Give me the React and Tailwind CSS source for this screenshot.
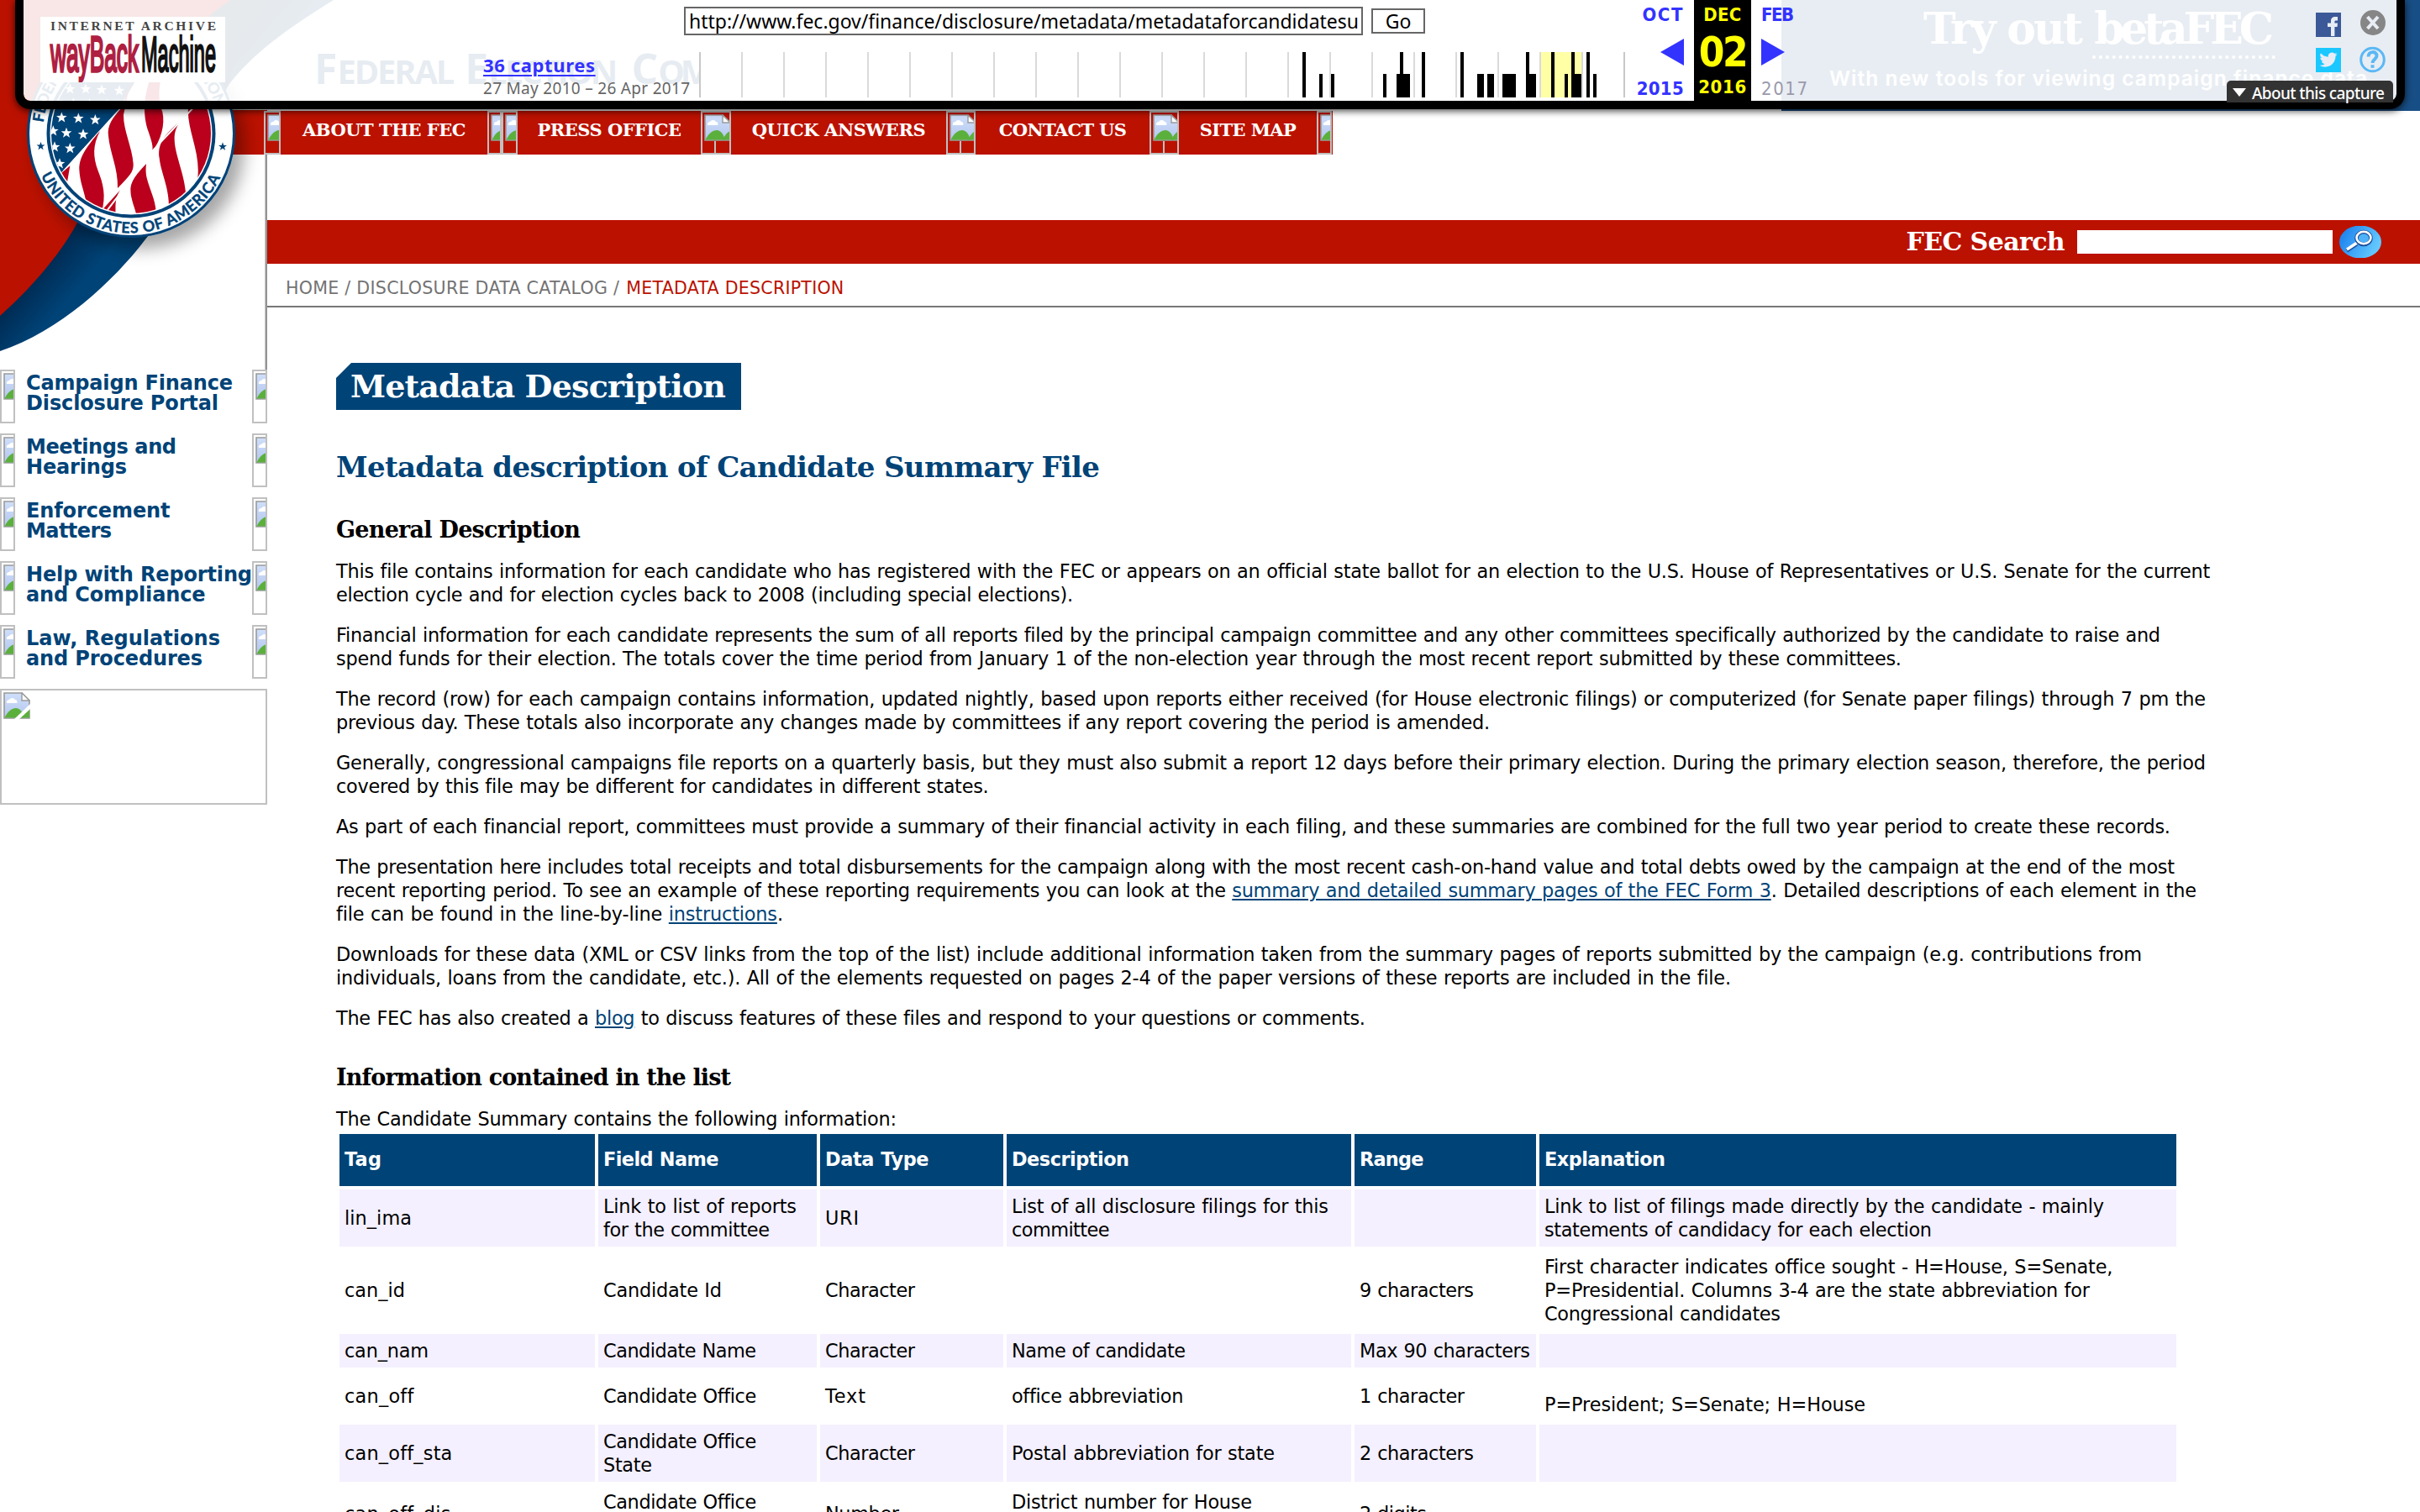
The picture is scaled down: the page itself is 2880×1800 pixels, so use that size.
import React, { useLayoutEffect, useRef, useState } from "react";

const SERIF = "font-['DejaVu_Serif',serif] font-bold";
const SANS = "font-['DejaVu_Sans',sans-serif]";
const UI = "font-['Noto_Sans',sans-serif]";

/* A single line of text tracked so that it fills the given width. */
function Fit({ w, className = "", children }) {
  const ref = useRef(null);
  const [spacing, setSpacing] = useState(0);
  useLayoutEffect(() => {
    const el = ref.current;
    el.style.letterSpacing = "0px";
    const natural = el.getBoundingClientRect().width;
    const next = (w - natural) / Math.max(1, el.textContent.length - 1);
    el.style.letterSpacing = next + "px";
    setSpacing(next);
  }, [w]);
  return (
    <span ref={ref} className={"inline-block whitespace-pre " + className} style={{ letterSpacing: spacing + "px" }}>
      {children}
    </span>
  );
}

/* Broken-image placeholder: bordered box with the page glyph clipped inside. */
function Broken({ className = "", wide = false }) {
  return (
    <span className={"block shrink-0 overflow-hidden border-2 border-[#c0c0c0] " + className}>
      <svg className="mt-[2px] ml-[2px] block h-8 w-8 max-w-none" viewBox="0 0 32 32">
        <defs>
          <linearGradient id="sky" x1="0" y1="0" x2="0" y2="1">
            <stop offset="0" stopColor="#cfdffa" />
            <stop offset="1" stopColor="#b3c6ee" />
          </linearGradient>
        </defs>
        <path d="M1 1H22L31 10V31H1Z" fill="url(#sky)" stroke="#9a9a9a" strokeWidth="1.6" />
        <path d="M4 13a3 3 0 0 1 3-4a4 4 0 0 1 7 0a2.500 2.500 0 0 1 2 4Z" fill="#fff" />
        <path d="M1.500 30.500C5 23 10 19 15 19C20 19 23 24 25 30.500Z" fill="#5bb03c" />
        <path d="M22 30.500C25 24 28 21 31 20V30.500Z" fill="#5bb03c" />
        <path d="M22 1V10H31Z" fill="#fff" stroke="#9a9a9a" strokeWidth="1.4" />
        {!wide && <path d="M13 32L32 14V20L19 32Z" fill="#fff" />}
      </svg>
    </span>
  );
}

const star = "M0 -20L5 -6.500L19 -6.200L8 2.500L12 16.500L0 8.300L-12 16.500L-8 2.500L-19 -6.200L-5 -6.500Z";
const stars = [
  [220, 60], [280, 63], [340, 68], [190, 108], [237, 115], [297, 120], [195, 165], [250, 170], [213, 225],
  [250, -42], [306, -42], [363, -39], [426, -36], [205, 5], [262, 8], [320, 12], [382, 14],
];

function Masthead() {
  return (
    <svg className="block h-[440px] w-[318px] overflow-visible" viewBox="0 0 318 440">
      <defs>
        <filter id="seal-shadow" x="-30%" y="-30%" width="170%" height="170%">
          <feDropShadow dx="11" dy="13" stdDeviation="10" floodColor="#000" floodOpacity="0.35" />
        </filter>
        <linearGradient id="swoosh" gradientUnits="userSpaceOnUse" x1="60" y1="300" x2="100" y2="335">
          <stop offset="0" stopColor="#00284f" />
          <stop offset="1" stopColor="#004377" />
        </linearGradient>
        <clipPath id="flag"><circle cx="156" cy="159" r="95" /></clipPath>
        <path id="ring-top" d="M51.600 146A105 105 0 0 1 260.400 146" />
        <path id="ring-bottom" d="M48.600 209A118.500 118.500 0 0 0 263.400 209" />
      </defs>
      <rect x="150" y="131" width="168" height="53" fill="#bb1100" />
      <path d="M397 0C340 35 300 65 273 100C235 160 215 235 173 285C135 335 70 395 0 418V0Z" fill="url(#swoosh)" />
      <path d="M275 0C245 20 225 40 200 70C150 130 125 215 91 267C70 305 35 345 0 376V0Z" fill="#bb1100" />
      <circle cx="156" cy="159" r="124" fill="#004377" filter="url(#seal-shadow)" />
      <circle cx="156" cy="159" r="121" fill="#fff" />
      <circle cx="156" cy="159" r="100.500" fill="#004377" />
      <circle cx="156" cy="159" r="96.500" fill="#fff" />
      <g clipPath="url(#flag)">
        <g transform="translate(0 120) scale(0.33333)">
          <path d="M100 -200H560L425 30L225 250L150 330Z" fill="#004377" />
          {stars.map(([x, y], i) => (
            <path key={i} d={star} transform={`translate(${x} ${y})`} fill="#fff" />
          ))}
          <path d="M560 -200L425 30L225 250L250 400H700V-200Z" fill="#fff" />
          <g fill="#ba001c">
            <path d="M250 232L215 262L240 290Z" />
            <path d="M357 108C300 175 283 205 283 245C285 290 300 320 310 370L362 400C380 340 368 295 350 250C332 200 330 160 357 108Z" />
            <path d="M440 20C400 60 382 90 387 125C392 185 422 240 420 312C460 270 478 255 476 225C472 165 440 105 441 50L470 -90Z" />
            <path d="M540 -90C505 0 515 70 530 110C542 145 548 165 543 182C575 140 590 85 580 40C570 10 560 -30 580 -100Z" />
            <path d="M360 395L430 318C410 345 412 375 413 412Z" />
            <path d="M522 225C470 280 462 300 468 340C474 370 484 390 490 420H558C560 360 535 320 524 275C520 258 520 245 522 225Z" />
            <path d="M642 75C580 125 562 160 569 205C575 260 605 310 603 385L665 360C665 270 625 200 623 140C622 110 630 95 642 75Z" />
            <path d="M672 20C665 110 725 190 702 300L780 200V20Z" />
          </g>
          <path d="M690 25L545 178L380 395" fill="none" stroke="#fff" strokeWidth="6" />
        </g>
      </g>
      <g fill="#004377" stroke="#004377" strokeWidth="0.400" className="font-['Lato',sans-serif] text-[18px] font-bold">
        <text textLength="288" lengthAdjust="spacing"><textPath href="#ring-top" textLength="288">FEDERAL ELECTION COMMISSION</textPath></text>
        <text textLength="266" lengthAdjust="spacing"><textPath href="#ring-bottom" textLength="266">UNITED STATES OF AMERICA</textPath></text>
        <path d={star} transform="translate(48.500 174) scale(0.25)" />
        <path d={star} transform="translate(265 174.500) scale(0.25)" />
      </g>
      <rect x="315.500" y="184" width="2.500" height="256" fill="#949494" />
    </svg>
  );
}

const ticks = [
  [718, 4, 1], [738, 4, 0], [752, 4, 0], [814, 4, 0], [830, 16, 0], [834, 4, 1], [860, 4, 1], [906, 4, 1],
  [926, 8, 0], [938, 8, 0], [956, 16, 0], [984, 4, 1], [984, 12, 0], [1014, 4, 1], [1030, 4, 0], [1038, 4, 1],
  [1038, 12, 0], [1056, 4, 1], [1064, 4, 0],
];

function Sparkline() {
  return (
    <svg className="ml-[18px] block h-[54px] w-[1102px] bg-white" viewBox="0 0 1102 54">
      <rect x="1002" width="48" height="54" fill="#ffffa5" />
      {Array.from({ length: 23 }, (_, i) => (
        <rect key={i} x={i * 50} width="2" height="54" fill={i === 22 || i === 0 ? "#c8c8c8" : "#dadada"} />
      ))}
      {ticks.map(([x, w, full], i) => (
        <rect key={i} x={x} y={full ? 0 : 26} width={w} height={full ? 54 : 28} fill="#000" />
      ))}
    </svg>
  );
}

const DATE = "font-['DejaVu_Sans_Condensed','DejaVu_Sans',sans-serif] text-[22px] leading-7 font-bold";

function Toolbar() {
  return (
    <div className={"absolute top-0 left-[18px] z-10 flex h-[130px] w-[2844px] rounded-b-[18px] border-x-10 border-b-10 border-black bg-white/90 bg-clip-padding shadow-[0_2px_8px_rgba(0,0,0,0.75)] " + UI}>
      <svg className="mt-5 ml-5 block h-[78px] w-[220px] shrink-0 bg-white" viewBox="0 0 220 78">
        <text x="12" y="15.500" textLength="197" className="font-['Liberation_Serif',serif] text-[15.500px] font-bold" fill="#444">INTERNET ARCHIVE</text>
        <g transform="translate(12 65) scale(1 2.200)" className="font-['Liberation_Sans',sans-serif] text-[27px]">
          <text x="0" y="0" textLength="105" lengthAdjust="spacingAndGlyphs" fill="#ae1f41" stroke="#ae1f41" strokeWidth="1.500">wayBack</text>
          <text x="108" y="0" textLength="89" lengthAdjust="spacingAndGlyphs" fill="#111" stroke="#111" strokeWidth="1.200">Machine</text>
        </g>
      </svg>
      <div className="ml-[307px] w-[239px] shrink-0 pt-[62px] whitespace-nowrap">
        <div className="h-[30px] text-[22px] leading-[30px] font-bold text-[#3333ff]">
          <Fit w={133} className="underline decoration-2 underline-offset-[3px]">36 captures</Fit>
        </div>
        <div className="text-[19px] leading-[26px] text-[#666]"><Fit w={246}>27 May 2010 – 26 Apr 2017</Fit></div>
      </div>
      <div className="w-[1120px] shrink-0">
        <div className="mt-2 flex h-[34px] items-center gap-[10px]">
          <div className="h-[34px] w-[808px] border-2 border-[#666] bg-white pl-1 text-[23px] leading-[31px]">
            <Fit w={797}>http://www.fec.gov/finance/disclosure/metadata/metadataforcandidatesu</Fit>
          </div>
          <div className="h-[30px] w-16 border-2 border-[#666] bg-white text-center text-[23px] leading-[27px]">Go</div>
        </div>
        <div className="h-5" />
        <Sparkline />
      </div>
      <div className={"flex w-[82px] shrink-0 flex-col items-end pr-3 text-[#3333ff] pt-1 " + DATE}>
        <Fit w={48}>OCT</Fit>
        <svg className="my-[14px] block h-8 w-7" viewBox="0 0 28 32"><path d="M28 0V32L0 16Z" fill="#3333ff" /></svg>
        <Fit w={56}>2015</Fit>
      </div>
      <div className={"flex h-[120px] w-[68px] shrink-0 flex-col items-center bg-black pt-1 text-[#ffff00] " + DATE}>
        <Fit w={45}>DEC</Fit>
        <span className="my-1 text-[49px] leading-[53px]"><Fit w={59}>02</Fit></span>
        <Fit w={57} className="-mt-[3px]">2016</Fit>
      </div>
      <div className={"flex shrink-0 flex-col items-start pt-1 pl-3 text-[#3333ff] " + DATE}>
        <Fit w={39}>FEB</Fit>
        <svg className="my-[14px] block h-8 w-7" viewBox="0 0 28 32"><path d="M0 0V32L28 16Z" fill="#3333ff" /></svg>
        <Fit w={55} className="font-normal text-[#9a9aac]">2017</Fit>
      </div>
      <div className="ml-auto flex gap-[22px] pr-[13px]">
        <div className="flex flex-col gap-[13px] pt-[15px]">
          <svg className="block h-[29px] w-[30px]" viewBox="0 0 30 29">
            <rect width="30" height="29" fill="#3b5998" />
            <path d="M18 28V17H14V12.500H18V10C18 6.500 20 5 23 5H26V9.500H24C22.800 9.500 22.400 10 22.400 11V12.500H26L25.500 17H22.400V28Z" fill="#e8edf5" />
          </svg>
          <svg className="block h-[29px] w-[30px]" viewBox="0 0 30 29">
            <rect width="30" height="29" fill="#1ac8ff" />
            <path transform="translate(4.500 3.500) scale(0.880)" d="M23.950 4.570a10 10 0 0 1-2.820.770 4.960 4.960 0 0 0 2.160-2.720c-.950.560-2 .960-3.130 1.190a4.920 4.920 0 0 0-8.380 4.480C7.690 8.090 4.070 6.130 1.640 3.160a4.920 4.920 0 0 0 1.520 6.570 4.900 4.900 0 0 1-2.230-.610v.060a4.920 4.920 0 0 0 3.950 4.830 5 5 0 0 1-2.210.080 4.940 4.940 0 0 0 4.600 3.420A9.870 9.870 0 0 1 0 19.540a14 14 0 0 0 7.550 2.210c9.050 0 14-7.500 14-13.980 0-.210 0-.420-.020-.630a9.940 9.940 0 0 0 2.460-2.550z" fill="#e8edf5" />
          </svg>
        </div>
        <div className="flex flex-col gap-[13px] pt-3">
          <svg className="block h-[30px] w-[31px]" viewBox="0 0 31 30">
            <circle cx="16" cy="15" r="15" fill="#868686" />
            <path d="M9.500 8L22 22M22 8L9.500 22" stroke="#e8edf5" strokeWidth="4" />
          </svg>
          <svg className="block h-[32px] w-[31px]" viewBox="0 0 31 32">
            <circle cx="15.500" cy="16" r="13.800" fill="none" stroke="#5ab8f5" strokeWidth="3" />
            <path d="M10.500 12.500C10.500 5.500 20.500 5.500 20.500 11.500C20.500 15.500 15.500 15.500 15.500 20" fill="none" stroke="#5ab8f5" strokeWidth="4" />
            <rect x="13.500" y="22.300" width="4" height="3.500" fill="#5ab8f5" />
          </svg>
        </div>
      </div>
      <div className="absolute right-1 -bottom-[2px] flex h-[26px] w-[198px] items-start rounded-t-[5px] bg-[#333] pl-[7px] text-white">
        <svg className="mt-[9px] block h-[10px] w-4" viewBox="0 0 16 10"><path d="M0 0H16L8 10Z" fill="#fff" /></svg>
        <Fit w={158} className="ml-[7px] text-[19px] leading-[30px] font-medium">About this capture</Fit>
      </div>
    </div>
  );
}

const nav = [
  ["ABOUT THE FEC", 194.5, "w-[246px]"],
  ["PRESS OFFICE", 171.5, "w-[218px]"],
  ["QUICK ANSWERS", 207, "w-[256px]"],
  ["CONTACT US", 152, "w-[207px]"],
  ["SITE MAP", 115, "w-[164px]"],
];

const side = [
  [["Campaign Finance", 246], ["Disclosure Portal", 229]],
  [["Meetings and", 179], ["Hearings", 120]],
  [["Enforcement", 171.5], ["Matters", 102]],
  [["Help with Reporting", 269], ["and Compliance", 213.5]],
  [["Law, Regulations", 231], ["and Procedures", 210]],
];

function A({ children }) {
  return <a className="text-[#004377] underline decoration-2 underline-offset-2">{children}</a>;
}

const paragraphs = [
  [
    ["This file contains information for each candidate who has registered with the FEC or appears on an official state ballot for an election to the U.S. House of Representatives or U.S. Senate for the current", 2230],
    ["election cycle and for election cycles back to 2008 (including special elections).", 877],
  ],
  [
    ["Financial information for each candidate represents the sum of all reports filed by the principal campaign committee and any other committees specifically authorized by the candidate to raise and", 2171],
    ["spend funds for their election. The totals cover the time period from January 1 of the non-election year through the most recent report submitted by these committees.", 1863],
  ],
  [
    ["The record (row) for each campaign contains information, updated nightly, based upon reports either received (for House electronic filings) or computerized (for Senate paper filings) through 7 pm the", 2225],
    ["previous day. These totals also incorporate any changes made by committees if any report covering the period is amended.", 1373],
  ],
  [
    ["Generally, congressional campaigns file reports on a quarterly basis, but they must also submit a report 12 days before their primary election. During the primary election season, therefore, the period", 2225],
    ["covered by this file may be different for candidates in different states.", 776],
  ],
  [["As part of each financial report, committees must provide a summary of their financial activity in each filing, and these summaries are combined for the full two year period to create these records.", 2183]],
  [
    ["The presentation here includes total receipts and total disbursements for the campaign along with the most recent cash-on-hand value and total debts owed by the campaign at the end of the most", 2188],
    [<>recent reporting period. To see an example of these reporting requirements you can look at the <A>summary and detailed summary pages of the FEC Form 3</A>. Detailed descriptions of each element in the</>, 2214],
    [<>file can be found in the line-by-line <A>instructions</A>.</>, 532],
  ],
  [
    ["Downloads for these data (XML or CSV links from the top of the list) include additional information taken from the summary pages of reports submitted by the campaign (e.g. contributions from", 2149],
    ["individuals, loans from the candidate, etc.). All of the elements requested on pages 2-4 of the paper versions of these reports are included in the file.", 1660],
  ],
  [[<>The FEC has also created a <A>blog</A> to discuss features of these files and respond to your questions or comments.</>, 1225]],
];

const heads = [["Tag", 44], ["Field Name", 137.5], ["Data Type", 123.5], ["Description", 140], ["Range", 76.5], ["Explanation", 144]];

const rows = [
  [[["lin_ima", 80]], [["Link to list of reports", 230], ["for the committee", 198]], [["URI", 40]], [["List of all disclosure filings for this", 377], ["committee", 116.5]], [], [["Link to list of filings made directly by the candidate - mainly", 666], ["statements of candidacy for each election", 461]]],
  [[["can_id", 72]], [["Candidate Id", 141]], [["Character", 107]], [], [["9 characters", 136]], [["First character indicates office sought - H=House, S=Senate,", 676], ["P=Presidential. Columns 3-4 are the state abbreviation for", 649], ["Congressional candidates", 281]]],
  [[["can_nam", 100]], [["Candidate Name", 182]], [["Character", 107]], [["Name of candidate", 207]], [["Max 90 characters", 203]], []],
  [[["can_off", 82]], [["Candidate Office", 182]], [["Text", 48]], [["office abbreviation", 204]], [["1 character", 125]], [["P=President; S=Senate; H=House", 382]]],
  [[["can_off_sta", 128]], [["Candidate Office", 182], ["State", 58]], [["Character", 107]], [["Postal abbreviation for state", 313]], [["2 characters", 136]], []],
  [[["can_off_dis", 126]], [["Candidate Office", 182], ["District", 78]], [["Number", 88]], [["District number for House", 286], ["candidates", 118]], [["2 digits", 80]], []],
];

const grid = "grid grid-cols-[304px_260px_218px_410px_216px_758px] gap-x-1";

function Row({ cells, index }) {
  const shade = index % 2 === 0 ? " bg-[#f4f0ff]" : "";
  return (
    <div className={grid}>
      {cells.map((lines, c) => (
        <div key={c} className={"flex min-h-10 flex-col items-start justify-center px-[6px] " + (index === 3 && c === 5 ? "pt-[26px] pb-[6px]" : "py-[6px]") + shade}>
          {lines.map(([t, w]) => <Fit key={t} w={w}>{t}</Fit>)}
        </div>
      ))}
    </div>
  );
}

export default function App() {
  return (
    <div className={"relative h-[1800px] w-[2880px] overflow-hidden bg-white text-black " + SANS}>
      <Toolbar />
      <div className="flex">
        <aside className="w-[318px] shrink-0">
          <Masthead />
          <ul className="flex flex-col gap-3">
            {side.map((lines) => (
              <li key={lines[0][0]} className="flex h-16 justify-between">
                <Broken className="h-16 w-[18px]" wide />
                <div className="ml-[13px] flex w-0 grow flex-col items-start pt-1 text-[24px] leading-6 font-bold text-[#004377]">
                  {lines.map(([t, w]) => <Fit key={t} w={w}>{t}</Fit>)}
                </div>
                <Broken className="h-16 w-[18px]" wide />
              </li>
            ))}
          </ul>
          <Broken className="mt-3 h-[138px] w-[318px]" />
        </aside>

        <div className="w-[2562px]">
          <header className="flex h-[132px] justify-between">
            <div className="ml-[56px] pt-[52px] font-['Open_Sans',sans-serif] leading-[58px] font-bold whitespace-nowrap text-[#004377]">
              <span className="text-[50px]">F</span><Fit w={140} className="text-[40px]">EDERAL</Fit>
              <span className="ml-[14px] text-[50px]">E</span><Fit w={154} className="text-[40px]">LECTION</Fit>
              <span className="ml-[19px] text-[50px]">C</span><Fit w={200} className="text-[40px]">OMMISSION</Fit>
            </div>
            <div className="h-[132px] w-[760px] bg-[#174e85] text-white">
              <div className={"flex gap-[15px] pt-1 pl-[169px] text-[52px] leading-[60px] " + SERIF}>
                <Fit w={190}>Try out</Fit>
                <span className="-ml-px h-[66px] w-[218px] border-b-4 border-dotted border-white pl-[2px]"><Fit w={214}>betaFEC</Fit></span>
              </div>
              <div className="mt-[7px] pl-[57px] font-['Inter',sans-serif] text-[24.500px] leading-[32px] font-semibold"><Fit w={640}>With new tools for viewing campaign finance data</Fit></div>
            </div>
          </header>

          <nav className={"relative -ml-1 flex h-[52px] w-[1272px] bg-[#bb1100] text-[21px] leading-[45px] text-white " + SERIF}>
            <Broken className="h-[52px] w-5" wide />
            {nav.map(([t, w, cls], i) => (
              <React.Fragment key={t}>
                <div className={"shrink-0 text-center " + cls}><Fit w={w}>{t}</Fit></div>
                {i === 4 ? (
                  <Broken className="h-[52px] w-[18px]" wide />
                ) : i === 0 ? (
                  <>
                    <Broken className="h-[52px] w-[17px]" wide />
                    <Broken className="h-[52px] w-[19px]" wide />
                  </>
                ) : (
                  <span className="relative block">
                    <Broken className={i === 1 ? "h-[52px] w-9" : "h-[52px] w-[35px]"} wide />
                    <i className="absolute top-9 left-4 block h-[14px] w-[2px] bg-[#c0c0c0]" />
                  </span>
                )}
              </React.Fragment>
            ))}
          </nav>

          <div className={"mt-[78px] flex h-[52px] items-center justify-end bg-[#bb1100] pr-[46px] text-[30px] leading-[52px] text-white " + SERIF}>
            <Fit w={189}>FEC Search</Fit>
            <div className="ml-[15px] h-7 w-[304px] bg-white" />
            <svg className="ml-2 block h-[38px] w-[50px]" viewBox="0 0 50 38">
              <defs>
                <linearGradient id="btn" x1="0" y1="0" x2="1" y2="0.4">
                  <stop offset="0" stopColor="#1479ec" />
                  <stop offset="1" stopColor="#63c8ff" />
                </linearGradient>
              </defs>
              <ellipse cx="25" cy="19" rx="25" ry="19.500" fill="url(#btn)" />
              <path d="M9 29.500L21 21.500" stroke="#1a4d9a" strokeWidth="4" />
              <path d="M9 28L21 20" stroke="#fff" strokeWidth="3.500" />
              <ellipse cx="29" cy="14.500" rx="8.500" ry="7.500" fill="#4db2f8" stroke="#1a4d9a" strokeWidth="4.500" />
              <ellipse cx="29" cy="14" rx="8.500" ry="7.200" fill="none" stroke="#fff" strokeWidth="2.600" />
            </svg>
          </div>

          <div className="flex h-[52px] border-b-2 border-[#777] pl-[22px] text-[20.600px] leading-[58px] text-[#737373]">
            <Fit w={397}>HOME / DISCLOSURE DATA CATALOG /</Fit>
            <Fit w={259} className="ml-2 text-[#bb1100]">METADATA DESCRIPTION</Fit>
          </div>

          <main className="pt-[66px] pl-[82px] text-[22.400px] leading-7">
            <h1 className={"h-14 w-[482px] bg-[#004377] pl-[17px] text-[38px] leading-[55px] text-white [clip-path:polygon(18px_0,100%_0,100%_100%,0_100%,0_18px)] " + SERIF}>
              <Fit w={447}>Metadata Description</Fit>
            </h1>
            <h2 className={"mt-12 h-10 text-[34px] leading-10 text-[#004377] " + SERIF}><Fit w={909}>Metadata description of Candidate Summary File</Fit></h2>
            <h3 className={"mt-9 mb-[18px] h-9 text-[27px] leading-[38px] " + SERIF}><Fit w={291}>General Description</Fit></h3>
            <div className="flex flex-col gap-5 [word-spacing:0.03em]">
              {paragraphs.map((lines, i) => (
                <p key={i} className="flex flex-col items-start">
                  {lines.map(([t, w], j) => <Fit key={j} w={w}>{t}</Fit>)}
                </p>
              ))}
            </div>
            <h3 className={"mt-[38px] mb-[18px] h-9 text-[27px] leading-[38px] " + SERIF}><Fit w={470}>Information contained in the list</Fit></h3>
            <p className="h-8 [word-spacing:0.03em]"><Fit w={667}>The Candidate Summary contains the following information:</Fit></p>
            <div className="ml-1 flex flex-col gap-1 [word-spacing:0.03em]">
              <div className={grid + " font-bold text-white"}>
                {heads.map(([t, w]) => (
                  <div key={t} className="flex h-[62px] items-center bg-[#004377] px-[6px] pb-[2px]"><Fit w={w}>{t}</Fit></div>
                ))}
              </div>
              {rows.map((cells, i) => <Row key={i} cells={cells} index={i} />)}
            </div>
          </main>
        </div>
      </div>
    </div>
  );
}
